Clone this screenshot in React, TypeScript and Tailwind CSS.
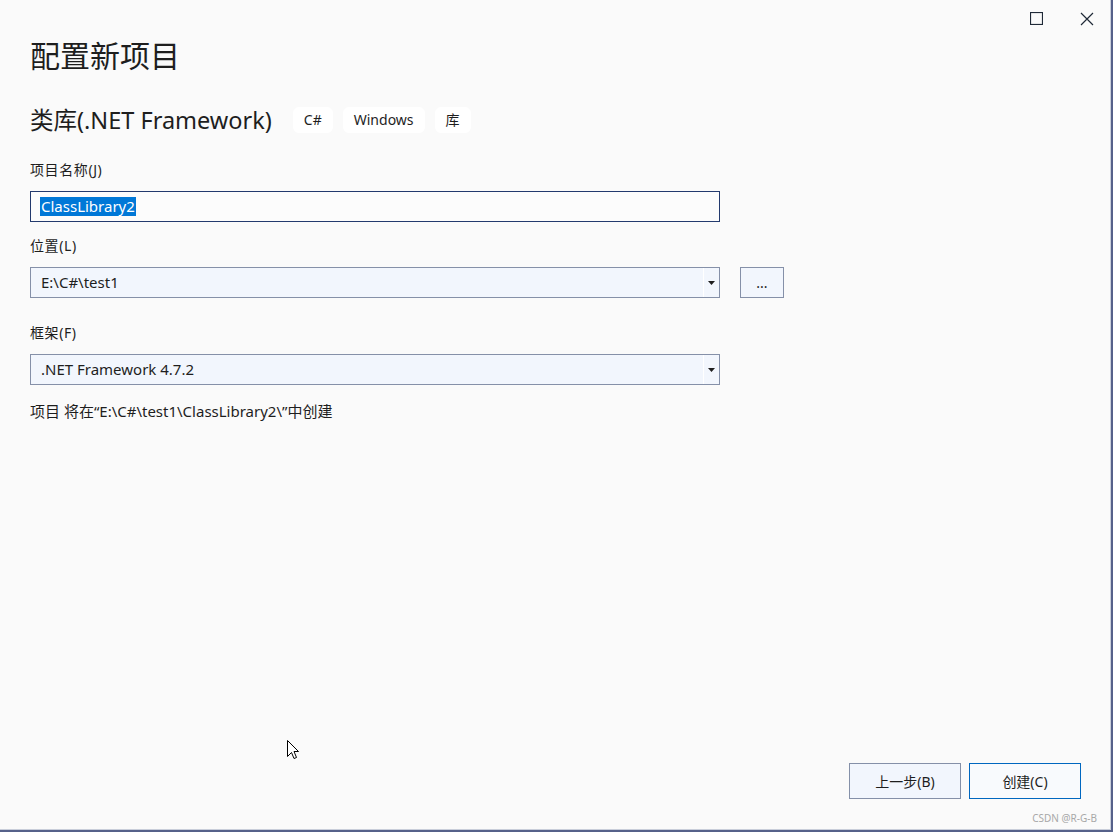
import React from "react";

const font = { fontFamily: '"Noto Sans", "Noto Sans CJK SC", sans-serif' };

function Tag({ children }: { children: React.ReactNode }) {
  return (
    <span className="flex h-[26px] items-center rounded-md bg-white px-[11px] text-[14px] leading-none text-[#1e1e1e]">
      {children}
    </span>
  );
}

function Arrow() {
  return (
    <div className="flex h-full w-[16px] items-center justify-center border-l border-white">
      <svg width="7" height="4" viewBox="0 0 7 4">
        <path d="M0 0h7L3.5 4z" fill="#1e1e1e" />
      </svg>
    </div>
  );
}

function Combo({ value }: { value: string }) {
  return (
    <div className="flex h-[31px] w-[690px] items-center border border-[#8590a8] bg-[#f2f6fd]">
      <span className="flex-1 pl-[10px] text-[15px] text-[#1e1e1e]">{value}</span>
      <Arrow />
    </div>
  );
}

export default function App() {
  return (
    <div className="flex h-[832px] w-[1113px] bg-[#56618a]" style={font}>
      <div className="relative flex h-[830px] w-[1111px] flex-col border-b border-r border-[#c9ceda] bg-[#fafafa] text-[#1e1e1e]">
        <div className="flex h-[36px] items-center justify-end gap-[37px] pr-[16px] pt-px">
          <svg width="13" height="13" viewBox="0 0 13 13">
            <rect x="0.5" y="0.5" width="12" height="12" fill="none" stroke="#1f2937" strokeWidth="1.2" />
          </svg>
          <svg width="14" height="14" viewBox="0 0 14 14">
            <path d="M1 1L13 13M13 1L1 13" stroke="#1f2937" strokeWidth="1.2" />
          </svg>
        </div>

        <div className="flex flex-1 flex-col pl-[30px]">
          <h1 className="text-[30px] leading-[40px]">配置新项目</h1>

          <div className="mt-[30px] flex h-[28px] items-center">
            <span className="text-[23.5px] leading-[28px]">类库(.NET Framework)</span>
            <div className="ml-[21px] flex gap-[10px]">
              <Tag>C#</Tag>
              <Tag>Windows</Tag>
              <Tag>库</Tag>
            </div>
          </div>

          <label className="mt-[26px] text-[14px] leading-[20px] tracking-[0.6px]">项目名称(J)</label>
          <div className="mt-[11px] flex h-[31px] w-[690px] items-center border border-[#233a6e] bg-[#fcfcfc] pl-[9px]">
            <span className="bg-[#0078d7] px-px text-[15px] leading-[19px] text-white">ClassLibrary2</span>
          </div>

          <label className="mt-[14px] text-[14px] leading-[20px] tracking-[0.6px]">位置(L)</label>
          <div className="mt-[11px] flex items-center gap-[20px]">
            <Combo value="E:\C#\test1" />
            <button className="flex h-[31px] w-[44px] items-center justify-center border border-[#8590a8] bg-[#f2f6fd] text-[14px]">
              ...
            </button>
          </div>

          <label className="mt-[25px] text-[14px] leading-[20px] tracking-[0.6px]">框架(F)</label>
          <div className="mt-[11px]">
            <Combo value=".NET Framework 4.7.2" />
          </div>

          <p className="mt-[16px] text-[15px] leading-[20px]">项目 将在“E:\C#\test1\ClassLibrary2\”中创建</p>

          <div className="flex-1" />

          <div className="flex justify-end gap-[8px] pb-[30px] pr-[29px]">
            <button className="h-[36px] w-[112px] border border-[#8590a8] bg-[#f2f6fd] text-[14px]">上一步(B)</button>
            <button className="h-[36px] w-[112px] border border-[#0067c0] bg-[#f8fafd] text-[14px]">创建(C)</button>
          </div>
        </div>

        <span className="absolute bottom-[6px] right-[13px] text-[10px] leading-none text-[#a8a8a8]">CSDN @R-G-B</span>

        <svg className="absolute left-[287px] top-[740px]" width="12" height="20" viewBox="0 0 12 20">
          <path d="M0.5 0.5V16.5L4.5 12.5L7 18.5L9.5 17.5L7 11.5H11.5Z" fill="white" stroke="black" strokeWidth="1" />
        </svg>
      </div>
    </div>
  );
}
